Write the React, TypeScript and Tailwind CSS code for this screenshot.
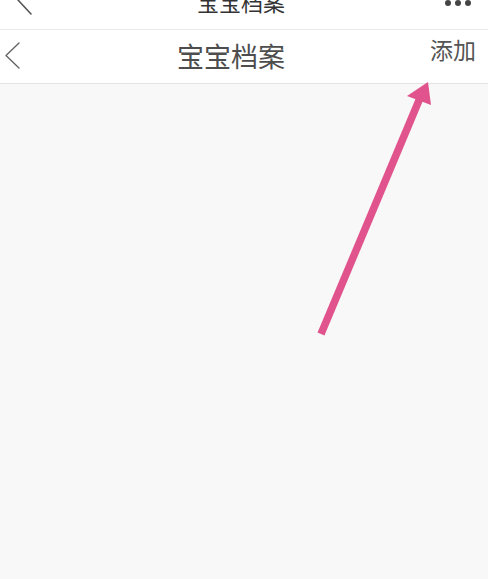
const cjk = { fontFamily: '"Noto Sans CJK SC", "Noto Sans", sans-serif' }

function Chevron({ className, w, h, width }: { className: string; w: number; h: number; width: number }) {
  return (
    <svg className={className} width={w} height={h} viewBox={`0 0 ${w} ${h}`} fill="none">
      <polyline
        points={`${w - 1},1 1,${h / 2} ${w - 1},${h - 1}`}
        stroke="currentColor"
        strokeWidth={width}
        strokeLinecap="round"
        strokeLinejoin="round"
      />
    </svg>
  )
}

function App() {
  return (
    <main className="relative h-[579px] w-[488px] overflow-hidden bg-[#f8f8f8]" style={cjk}>
      {/* outer webview bar, scrolled partly out of view */}
      <header className="relative h-[30px] overflow-hidden bg-white border-b border-[#ececec]">
        <div className="-mt-[16px] flex h-[30px] items-center justify-between pl-[17px] pr-[17px]">
          <Chevron className="mt-[2px] text-[#555]" w={15} h={30} width={1.6} />
          <div className="flex gap-[4px] pt-[8px]">
            <span className="h-[6px] w-[6px] rounded-full bg-[#444]" />
            <span className="h-[6px] w-[6px] rounded-full bg-[#444]" />
            <span className="h-[6px] w-[6px] rounded-full bg-[#444]" />
          </div>
        </div>
        <span className="absolute left-[197px] -top-[10px] text-[22px] leading-none text-[#333]">宝宝档案</span>
      </header>

      {/* page nav bar */}
      <nav className="relative flex h-[54px] items-center justify-between bg-white border-b border-[#e4e4e4] pl-[5px] pr-[12px]">
        <Chevron className="mb-[2px] text-[#666]" w={15} h={27} width={1.4} />
        <h1 className="absolute left-[177px] top-[9px] text-[27px] leading-[34px] text-[#4d4d4d]">宝宝档案</h1>
        <button className="-mt-[14px] text-[23px] leading-none text-[#555]">添加</button>
      </nav>

      {/* pointer towards the add button */}
      <svg className="absolute left-0 top-0" width="488" height="579" viewBox="0 0 488 579">
        <line x1="321" y1="334" x2="420" y2="98" stroke="#e0538c" strokeWidth="7.5" />
        <polygon points="428,82 407,96 431,105" fill="#e0538c" />
      </svg>
    </main>
  )
}

export default App
